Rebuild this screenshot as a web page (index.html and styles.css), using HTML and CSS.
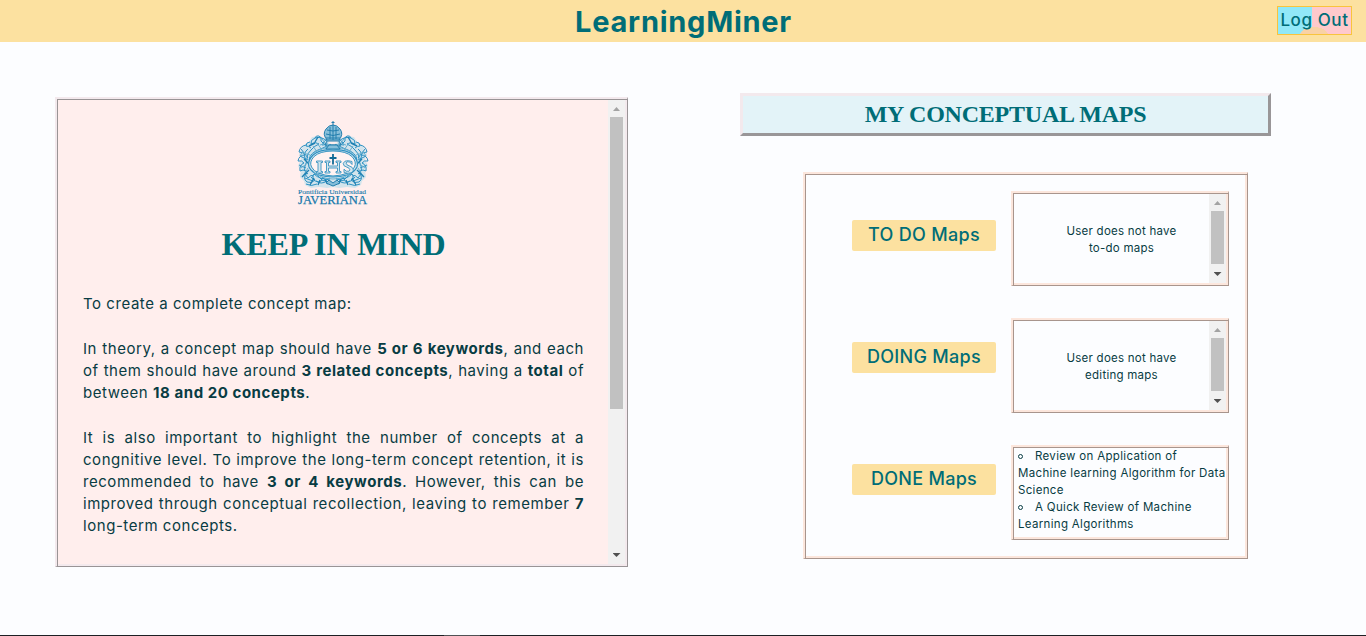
FILE: index.html
```html
<!DOCTYPE html>
<html lang="en">
<head>
<meta charset="utf-8">
<title>LearningMiner</title>
<link rel="stylesheet" href="styles.css">
</head>
<body>
<header class="topbar">
  <h1 class="brand">LearningMiner</h1>
  <a class="logout"><span>Log Out</span></a>
</header>
<main class="page">
  <section class="ridge tips">
    <div class="tips-body">
      <svg class="crest" width="74" height="86" viewBox="0 0 74 86">
        <defs>
          <g id="half" fill="none" stroke="#2d91c3" stroke-width="1">
            <path d="M32 21l-8-5-8 1-3 5-6 4-4 8 2 5-3 7 3 5-1 6 4 4 1 4 6 3 8-1 8 1 6-1V29z" fill="#d3e4ec" stroke="none"/>
            <path d="M33 18q-5 2-7 7q3-1 5 1q-4 2-9 4q-8 3-9 10M31 21q-6-5-12-3q-5 2-4 6q4-3 8 0q-5 2-8 6M19 18q1-3 4-2q3 1 2 5l4 4M14 22q-4 0-4 4q3 0 5 2"/>
            <path d="M10 25q-6 1-7 7q4 0 6 3q-6 0-7 6q4-1 6 2q-5 2-4 8q3-2 6 0q-2 4 2 7q3-4 6-2M5 29l7 9M12 29q-5 4-3 9q3 4 0 8q-2 5 3 8M15 30q-5 4-4 9M3 45l7 3M4 36l8 4"/>
            <path d="M11 53q-5 5 0 9q5 2 8-2q-4-3-1-6q3-1 5 3q3 5 8 4M15 57q3 5 8 5q4-1 3-4M9 58l8 3M20 61q5 4 11 0M26 57q4 5 8 1M18 54q6 6 16 5M10 64q5 3 11 0"/>
            <path d="M37 30q-13-1-20 5q-6 6-4 12q3 6 10 8q7 2 14 2" stroke-width="1.2"/>
            <path d="M37 27q-12 0-21 7M16 50q8 9 21 9M21 23l5 7M26 19l7 9M17 26l4 6M24 25l8-2M29 29l6-5M7 31l-3 5M13 42l-8 6M14 35l-7-2M12 48l-5 8" stroke="#68afcf"/>
            <path d="M13 50l-7 7M8 39l4 4M18 58l-4 7M24 60l-2 5M29 60l3 4M13 26l6-3M22 17l-3 5" stroke="#1f80b2" stroke-width="1.400"/>
          </g>
        </defs>
        <use href="#half"/>
        <use href="#half" transform="matrix(-1 0 0 1 74 0)"/>
        <path d="M37 31q-13 0-19 5.500q-5 5.500-2.500 10.500q4 8 21.500 9q17.500-1 21.500-9q2.500-5-2.500-10.500q-6-5.500-19-5.500z" fill="#fff3f2" stroke="#3494c2"/>
        <g fill="#87bfda" stroke="#237eae" stroke-width="1">
          <path d="M31 20q-5-6-1-11q3-4 7-4t7 4q4 5-1 11z"/>
          <path d="M30 18h14M30 14q7 3 14 0M31 10q6 2 12 0M34 7v12M37 5v15M40 7v12M31 21h12l2 4H29zM37 1v4M35.500 2.500h3" fill="none"/>
          <path d="M33 25l-3 4h14l-3-4zM33 60l4 3 4-3 3 3-7 3-7-3z"/>
        </g>
        <g fill="#d3e6ee" stroke="#3a93bf" stroke-width=".9">
          <path d="M20.500 41h6v1.500H25v9h1.500V53h-6v-1.500H22v-9h-1.500zM29 41h5v1.500h-1.500V46h9v-3.500H40V41h5v1.500h-1.500v9H45V53h-5v-1.500h1.500V48h-9v3.500H34V53h-5v-1.500h1.500v-9H29z"/>
          <path d="M56 44.500v-3q-4-1.500-7-.3q-3 2-1 4.500l5 2.500q2 2 0 3q-3 1-5-2v3.300q4 1.500 7 .3q4-2 1-5.500l-5-2.500q-2-2 0-3q3-1 5 2.700z"/>
        </g>
        <path d="M37 34v10.500M33.500 38h7" stroke="#126b96" stroke-width="1.800"/>
        <text class="crest-text" x="2" y="73.500" font-size="7" textLength="68" lengthAdjust="spacingAndGlyphs">Pontificia Universidad</text>
        <text class="crest-text name" x="2" y="84" font-size="12.500" textLength="69" lengthAdjust="spacingAndGlyphs">JAVERIANA</text>
      </svg>
      <h2 class="tips-title">KEEP IN MIND</h2>
      <p><span class="short">To create a complete concept map:</span></p>
      <p><span class="full">In theory, a concept map should have <b>5 or 6 keywords</b>, and each</span>
        <span class="full">of them should have around <b>3 related concepts</b>, having a <b>total</b> of</span>
        <span class="short">between <b>18 and 20 concepts</b>.</span></p>
      <p><span class="full">It is also important to highlight the number of concepts at a</span>
        <span class="full">congnitive level. To improve the long-term concept retention, it is</span>
        <span class="full">recommended to have <b>3 or 4 keywords</b>. However, this can be</span>
        <span class="full">improved through conceptual recollection, leaving to remember <b>7</b></span>
        <span class="short">long-term concepts.</span></p>
    </div>
    <div class="scroll"><i class="up"></i><i class="thumb"></i><i class="down"></i></div>
  </section>
  <section class="maps">
    <h2 class="maps-title">MY CONCEPTUAL MAPS</h2>
    <div class="ridge frame">
      <div class="row"><a class="tag t1">TO DO Maps</a>
        <div class="ridge box"><p class="empty">User does not have<br>to-do maps</p><div class="scroll"><i class="up"></i><i class="thumb"></i><i class="down"></i></div></div></div>
      <div class="row"><a class="tag t2">DOING Maps</a>
        <div class="ridge box"><p class="empty">User does not have<br>editing maps</p><div class="scroll"><i class="up"></i><i class="thumb"></i><i class="down"></i></div></div></div>
      <div class="row"><a class="tag t3">DONE Maps</a>
        <div class="ridge box"><ul class="list"><li>Review on Application of<br>Machine learning Algorithm for Data<br>Science</li><li>A Quick Review of Machine<br>Learning Algorithms</li></ul></div></div>
    </div>
  </section>
</main>
<footer class="strip"><i></i></footer>
</body>
</html>
```
FILE: styles.css
```css
*, *::before { box-sizing: border-box; }
html, body { margin: 0; height: 636px; overflow: hidden; }
body { display: flex; flex-direction: column; background: #fcfdff; color: #083c43; font-family: Inter, "Open Sans", sans-serif; }
h1, h2, p, ul { margin: 0; padding: 0; }

.topbar { display: grid; grid-template-columns: 1fr auto 1fr; height: 42px; background: #fce1a0; color: #006d77; }
.brand { grid-column: 2; padding-top: 1px; font-size: 29px; line-height: 41px; font-weight: 700; letter-spacing: 0.75px; margin-right: -1px; white-space: nowrap; }
.logout { justify-self: end; width: 75px; height: 29px; margin: 6px 14px 0 0; border: 1px solid #f9c43c; background: radial-gradient(ellipse 14px 8px at 36px 28px, #f9d2a5 98%, transparent 100%), linear-gradient(90deg, #91e8f8 34px, #ffc9cc 34px); font-size: 17px; font-weight: 500; line-height: 26px; text-align: center; white-space: nowrap; letter-spacing: 0.6px; }

.page { flex: 1; display: flex; align-items: flex-start; padding-left: 55px; }
.ridge { --light: #f3e9ed; --dark: #999496; border: solid; border-width: 2px 1px 1px 2px; border-color: var(--light) var(--dark) var(--dark) var(--light); padding: 1px 2px 2px 1px; box-shadow: inset 1px 1px var(--dark), inset -2px -2px var(--light); }
.tips { display: flex; width: 573px; height: 470px; margin-top: 55px; background: #ffeeed; }
.tips-body { flex: 1; padding: 20px 24px 0 25px; overflow: hidden; }
.crest { display: block; margin: 0 auto; transform: translateX(-1px); }
.crest-text { font-family: "Liberation Serif", serif; fill: #1679ac; stroke: #1679ac; stroke-width: 0.1px; }
.crest-text.name { stroke-width: 0.25px; }
.tips-title { margin: 16px 0 27px; color: #006d77; font: bold 32px/44px "Liberation Serif", serif; text-align: center; letter-spacing: -0.15px; white-space: nowrap; }
.tips-body p { margin-bottom: 23px; font-size: 15px; line-height: 22px; }
.tips-body span { display: block; white-space: nowrap; letter-spacing: 0.55px; }
.tips-body .full { text-align: justify; text-align-last: justify; }
.tips-body b { font-weight: 700; }

.scroll { display: flex; flex-direction: column; align-items: center; flex: 0 0 17px; background: #f1f1f1; }
.scroll .thumb { width: 13px; height: 53px; background: #c1c1c1; }
.tips .thumb { height: 292px; }
.up, .down { width: 7px; height: 4px; clip-path: polygon(50% 0, 100% 100%, 0 100%); background: #a3a3a3; }
.up { margin: 7px 0 6px; }
.down { width: 8px; margin: auto 0 7px; background: #505050; clip-path: polygon(0 0, 100% 0, 50% 100%); }

.maps { display: flex; flex-direction: column; width: 531px; margin: 51px 0 0 112px; }
.maps-title { height: 43px; border: 3px solid; border-color: #f3e9ed #999698 #999698 #f3e9ed; background: #e3f3f8; color: #006d77; font: bold 24px/37px "Liberation Serif", serif; text-align: center; letter-spacing: -0.23px; white-space: nowrap; }
.frame { display: flex; flex-direction: column; gap: 32px; width: 445px; height: 387px; margin: 36px 0 0 63px; padding: 17px 18px 0 47px; }
.frame, .box { --light: #fce6dc; --dark: #a8958d; }
.row { display: flex; height: 95px; flex: none; }
.tag { width: 144px; height: 31px; margin-right: 15px; border-radius: 2px; background: #fce1a0; color: #006d77; font-size: 18px; font-weight: 500; line-height: 30px; text-align: center; white-space: nowrap; letter-spacing: 0.3px; }
.t1 { margin-top: 29px; }
.t2 { margin-top: 24px; }
.t3 { margin-top: 19px; }
.box { display: flex; width: 218px; height: 95px; font-size: 11.5px; line-height: 17px; letter-spacing: 0.25px; white-space: nowrap; }
.empty { flex: 1; padding: 29px 0 0 20px; text-align: center; }
.list { padding-left: 4px; list-style: none; letter-spacing: 0.32px; }
.list li::before { content: ""; display: inline-block; width: 5px; height: 5px; margin: 0 12px 1px 0; border: 1px solid #083c43; border-radius: 50%; }
.strip { height: 1px; background: #1d2024; }
.strip i { display: block; width: 36px; height: 1px; margin-left: 444px; background: #505255; }
```
